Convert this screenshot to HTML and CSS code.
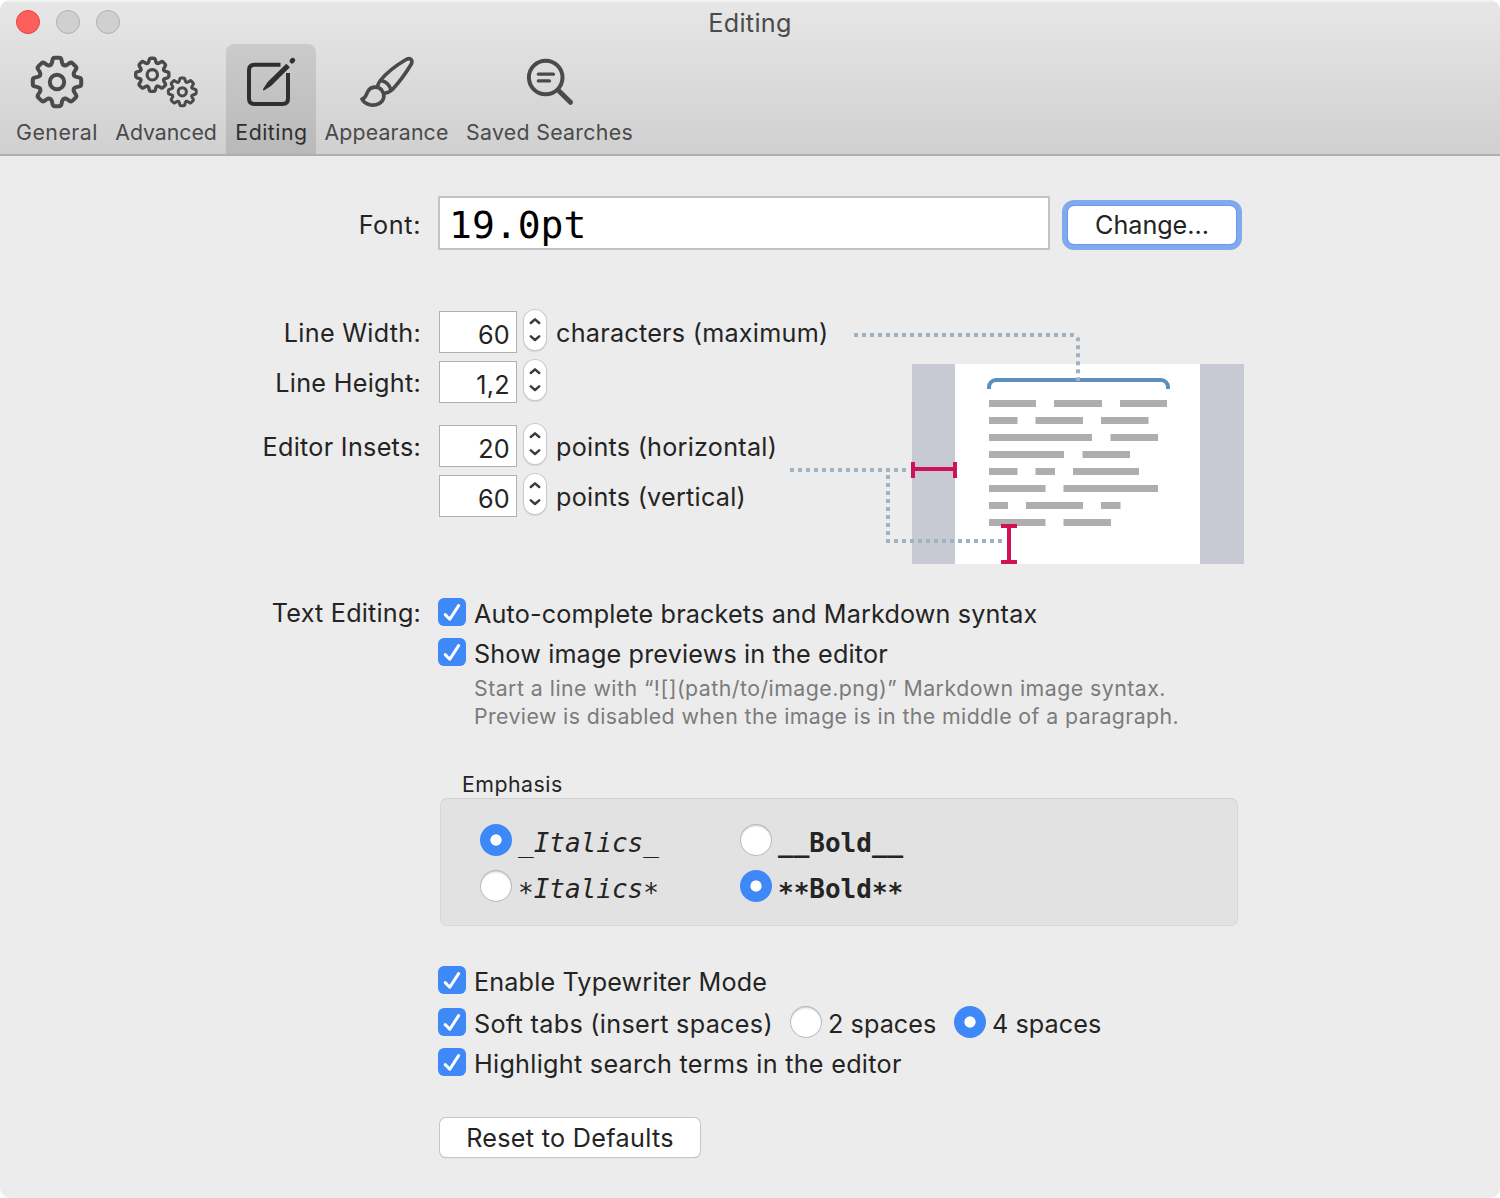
FILE: index.html
```html
<!DOCTYPE html>
<html lang="en">
<head>
<meta charset="utf-8">
<title>Editing</title>
<link rel="stylesheet" href="styles.css">
</head>
<body>
<svg class="defs" width="0" height="0" aria-hidden="true">
  <defs>
    <path id="tooth" vector-effect="non-scaling-stroke" d="M-6.96-16.8Q-5.5-17.4-5.1-19.2L-4.4-22.4Q-4-24.2-2.2-24.2H2.2Q4-24.2 4.4-22.4L5.1-19.2Q5.5-17.4 6.96-16.8"/>
    <g id="gear">
      <use href="#tooth"/>
      <use href="#tooth" transform="rotate(45)"/>
      <use href="#tooth" transform="rotate(90)"/>
      <use href="#tooth" transform="rotate(135)"/>
      <use href="#tooth" transform="rotate(180)"/>
      <use href="#tooth" transform="rotate(225)"/>
      <use href="#tooth" transform="rotate(270)"/>
      <use href="#tooth" transform="rotate(315)"/>
    </g>
    <path id="check" d="M7.2 16.6L11.8 21.2L20.6 7.6"/>
    <path id="arrows" d="M7.6 13.2L12 9.4L16.4 13.2M7.6 27.2L12 31L16.4 27.2"/>
  </defs>
</svg>
<div class="window">
  <header class="toolbar">
    <div class="titlebar">
      <div class="lights"><i class="light close"></i><i class="light"></i><i class="light"></i></div>
      <h1 class="title">Editing</h1>
    </div>
    <nav class="tabs">
      <a class="tab general">
        <svg class="icon" viewBox="25 48 64 64"><g stroke-width="4"><use href="#gear" transform="translate(57 82)"/><circle cx="57" cy="82" r="7.2"/></g></svg>
        <span class="wide">General</span>
      </a>
      <a class="tab advanced">
        <svg class="icon" viewBox="134 48 64 64"><g stroke-width="3.4"><use href="#gear" transform="translate(152.3 74.8) scale(.685)"/><circle cx="152.3" cy="74.8" r="5.2" stroke-width="3.2"/></g><g stroke-width="3"><use href="#gear" transform="translate(182.3 91.8) scale(.575)"/><circle cx="182.3" cy="91.8" r="4.1"/></g></svg>
        <span class="narrow">Advanced</span>
      </a>
      <a class="tab editing selected">
        <svg class="icon" viewBox="239 48 64 64"><path stroke-width="4" d="M280.5 64.8H254.5Q249 64.8 249 70.3V98.5Q249 104 254.5 104H282.5Q288 104 288 98.5V73"/><path class="fill" stroke="none" d="M263.2 90.3Q262.6 89.7 263.4 88.6L267.2 82.7Q267.7 82 268.4 81.3L286.3 63.7L289.9 67.3L271.8 85.3Q271 86.1 270.2 86.6L264.7 90.1Q263.7 90.8 263.2 90.3Z"/><path stroke-width="4.8" stroke-linecap="round" d="M292 61L292.8 60.2"/></svg>
        <span class="wide">Editing</span>
      </a>
      <a class="tab appearance">
        <svg class="icon" viewBox="355 48 64 64"><g stroke-width="3.6"><path d="M377.5 86.5C378 84.5 378.5 82.8 380.3 80.5C386 73.5 396 65.5 406.5 59.3Q409.6 57.6 411.3 59.7Q412.7 61.6 411 64.5C405 74.5 398.5 83 392 90Q389 92.7 384.5 93.2"/><path d="M381.8 80.8Q388.5 82.2 390.8 89.5"/><path d="M361.9 99C365.5 98.8 366 95 367.8 91.5C370.5 86.3 378 85.6 381.6 90C385.3 94.8 384.5 100.5 379 103.6C372.5 107 364.5 104.3 361.9 99Z"/></g></svg>
        <span>Appearance</span>
      </a>
      <a class="tab searches">
        <svg class="icon" viewBox="518 48 64 64"><circle cx="545.7" cy="77.5" r="16.8" stroke-width="4"/><path stroke-width="3.2" d="M538.3 74.2H553.5M538.3 80.9H549.5"/><path stroke-width="5" d="M559.5 91.5L570.5 102.3"/></svg>
        <span class="mid">Saved Searches</span>
      </a>
    </nav>
  </header>

  <main class="form">
    <section class="row font-row">
      <label class="label wide">Font:</label>
      <div class="font-field">19.0pt</div>
      <button class="button focused">Change...</button>
    </section>

    <section class="metrics">
      <div class="fields">
        <div class="row"><label class="label">Line Width:</label><span class="number">60</span><svg class="stepper" viewBox="0.5 0 23 41"><use href="#arrows"/></svg><span class="unit">characters (maximum)</span></div>
        <div class="row"><label class="label">Line Height:</label><span class="number">1,2</span><svg class="stepper" viewBox="0.5 0 23 41"><use href="#arrows"/></svg></div>
        <div class="row insets"><label class="label">Editor Insets:</label><span class="number">20</span><svg class="stepper" viewBox="0.5 0 23 41"><use href="#arrows"/></svg><span class="unit">points (horizontal)</span></div>
        <div class="row"><label class="label"></label><span class="number">60</span><svg class="stepper" viewBox="0.5 0 23 41"><use href="#arrows"/></svg><span class="unit">points (vertical)</span></div>
      </div>
      <svg class="diagram" viewBox="785 325 465 245">
        <path fill="#c8cad3" d="M912 364h43v200h-43zM1200 364h44v200h-44z"/>
        <path fill="#fff" d="M955 364h245v200h-245z"/>
        <path class="bracket" d="M989 389V387A7 7 0 0 1 996 380H1161A7 7 0 0 1 1168 387V389"/>
        <path class="lines" d="M989 403.5H1036M1054 403.5H1102M1120 403.5H1167M989 420.5H1017.5M1035.5 420.5H1083M1101 420.5H1148.5M989 437.5H1092M1110.5 437.5H1158M989 454.5H1064M1082.5 454.5H1130M989 471.5H1017.5M1035.5 471.5H1055M1073 471.5H1139M989 488.5H1045.5M1063.5 488.5H1158M989 505.5H1008M1026 505.5H1083M1101 505.5H1120.5M989 522.5H1045.5M1063.5 522.5H1111"/>
        <path class="dots" d="M854 335H1073A5 5 0 0 1 1078 340V381"/>
        <path class="dots" d="M790 470H906"/>
        <path class="dots" d="M888 475V535"/>
        <path class="dots" d="M886 541H1002"/>
        <path class="gauge" d="M913 462V478M913 469H955M955 462V478M1001 526H1017M1009 526V562M1001 562H1017"/>
      </svg>
    </section>

    <section class="row text-editing">
      <label class="label">Text Editing:</label>
      <div class="stack">
        <div class="option"><svg class="check" viewBox="0 0 28 28"><use href="#check"/></svg><span class="tight">Auto-complete brackets and Markdown syntax</span></div>
        <div class="option second"><svg class="check" viewBox="0 0 28 28"><use href="#check"/></svg><span class="tight">Show image previews in the editor</span></div>
        <p class="hint"><span class="h1">Start a line with “![](path/to/image.png)” Markdown image syntax.</span><br><span class="h2">Preview is disabled when the image is in the middle of a paragraph.</span></p>

        <h2 class="group-title">Emphasis</h2>
        <div class="group">
          <div class="choice"><i class="radio on"></i><em>_Italics_</em></div>
          <div class="choice"><i class="radio"></i><b>__Bold__</b></div>
          <div class="choice"><i class="radio"></i><em><span class="star">*</span>Italics<span class="star">*</span></em></div>
          <div class="choice"><i class="radio on"></i><b><span class="star">**</span>Bold<span class="star">**</span></b></div>
        </div>

        <div class="option typewriter"><svg class="check" viewBox="0 0 28 28"><use href="#check"/></svg><span class="tight">Enable Typewriter Mode</span></div>
        <div class="option tabs-option"><svg class="check" viewBox="0 0 28 28"><use href="#check"/></svg><span class="soft">Soft tabs (insert spaces)</span><i class="radio"></i><span class="spaces">2 spaces</span><i class="radio on"></i><span class="spaces">4 spaces</span></div>
        <div class="option highlight"><svg class="check" viewBox="0 0 28 28"><use href="#check"/></svg><span>Highlight search terms in the editor</span></div>

        <button class="button reset">Reset to Defaults</button>
      </div>
    </section>
  </main>
</div>
</body>
</html>
```
FILE: styles.css
```css
* { box-sizing: border-box; }
body { margin: 0; background: #fff; font-family: Inter, "Liberation Sans", sans-serif; font-size: 25.2px; line-height: 32px; letter-spacing: .28px; color: #242424; white-space: nowrap; }
.defs { position: absolute; }
.window { width: 1500px; height: 1198px; background: #ececec; border-radius: 10px; overflow: hidden; }

.toolbar { height: 156px; background: linear-gradient(#e7e7e7, #d0d0d0); border-bottom: 2px solid #b0b0b0; box-shadow: inset 0 2px #f3f3f3; }
.titlebar { height: 44px; display: grid; grid-template-columns: 128px 1fr 128px; }
.lights { display: flex; gap: 16px; padding: 10px 0 0 16px; }
.light { width: 24px; height: 24px; border-radius: 50%; background: #d0d0d0; border: 1px solid #b0b0b0; }
.light.close { background: #fd5f5a; border-color: #e2443f; }
.title { margin: 0; padding-top: 7px; text-align: center; font-size: 25.2px; font-weight: 400; letter-spacing: .3px; color: #4b4b4b; }

.tabs { display: flex; height: 110px; padding-left: 7px; }
.tab { display: flex; flex-direction: column; align-items: center; height: 110px; padding-top: 4px; color: #4a4a4a; font-size: 21.3px; line-height: 28px; font-weight: 430; letter-spacing: .15px; }
.tab span { margin-top: 6px; }
.general { width: 99px; }
.advanced { width: 120px; }
.editing { width: 90px; }
.appearance { width: 141px; }
.searches { width: 185px; }
.tab.selected { background: linear-gradient(#cbcbcb, #b9b9b9); border-radius: 8px 8px 0 0; color: #2f2f2f; }
.icon { width: 64px; height: 64px; fill: none; stroke: currentColor; stroke-linecap: round; stroke-linejoin: round; flex: none; }
.editing .icon { stroke-linecap: butt; }
.icon .fill { fill: currentColor; }
.tab .wide { letter-spacing: .5px; padding-left: 1px; }
.tab .mid { letter-spacing: .31px; }
.tab .narrow { letter-spacing: -.05px; }

.row { display: flex; align-items: flex-start; }
.label { width: 438px; flex: none; padding-right: 17px; text-align: right; }
.wide { letter-spacing: .6px; }
.tight { letter-spacing: .15px; }

.font-row { padding-top: 40px; }
.font-row .label { padding-top: 13px; }
.font-field { width: 612px; height: 54px; border: 2px solid #c3c3c3; background: #fff; padding-left: 9px; font: 38px/55px "DejaVu Sans Mono", monospace; letter-spacing: 0; color: #000; }
.button { font: inherit; letter-spacing: .3px; color: #242424; background: #fff; border: 0; padding: 0; text-align: center; }
.focused { width: 168px; height: 38px; margin: 10px 0 0 18px; border-radius: 6px; box-shadow: 0 0 0 1px #6a9ae6, 0 0 0 6px #7fabee; letter-spacing: -.05px; padding-top: 1px; line-height: 37px; }

.metrics { display: flex; margin-top: 59px; height: 208px; }
.fields { width: 785px; flex: none; }
.fields .row { height: 50px; }
.fields .label { padding-top: 8px; min-height: 40px; }
.fields .insets { margin-top: 14px; }
.number { width: 80px; height: 44px; margin: 1px 0 0; flex: none; border: 1px solid #ececec; background: #fff; box-shadow: inset 0 0 0 1px #b1b1b1; padding: 2px 7px 0 0; text-align: right; line-height: 45px; }
.stepper { width: 22px; height: 40px; margin: 1px 1px 0 6px; flex: none; background: #fff; border-radius: 11px; box-shadow: 0 0 0 1px #cbcbcb, 0 1px 2px rgba(0,0,0,.3); fill: none; stroke: #3c3c3c; stroke-width: 2.6; stroke-linecap: round; stroke-linejoin: round; }
.unit { padding: 8px 0 0 9px; letter-spacing: .25px; }
.diagram { width: 465px; height: 245px; margin-top: 16px; flex: none; fill: none; }
.bracket { stroke: #5c90ba; stroke-width: 4; }
.lines { stroke: #aeaeae; stroke-width: 7; }
.dots { stroke: #a0b1c0; stroke-width: 4; stroke-dasharray: 4; }
.gauge { stroke: #cf1159; stroke-width: 4; }

.text-editing { margin-top: 81px; }
.text-editing > .label { margin-top: -1px; letter-spacing: .2px; }
.stack { display: flex; flex-direction: column; align-items: flex-start; }
.option { display: flex; height: 28px; }
.option > span { margin-left: 8px; }
.second { margin-top: 12px; }
.check { width: 28px; height: 28px; border-radius: 6px; background: #3f88f7; flex: none; fill: none; stroke: #fff; stroke-width: 3; stroke-linecap: round; stroke-linejoin: round; }
.hint { margin: 8px 0 0 36px; font-size: 21.3px; line-height: 28px; color: #7b7b7b; }
.h1 { letter-spacing: .475px; }
.h2 { letter-spacing: .41px; }
.group-title { margin: 40px 0 0 24px; font-size: 21.3px; line-height: 28px; font-weight: 400; letter-spacing: .5px; }
.group { width: 798px; height: 128px; margin-left: 2px; border: 1px solid #d8d8d8; border-top-color: #cfcfcf; border-radius: 7px; background: #e2e2e2; padding: 25px 39px; display: grid; grid-template-columns: 260px 260px; grid-template-rows: 32px 32px; row-gap: 14px; }
.choice { display: flex; font: 26px/38px "DejaVu Sans Mono", monospace; letter-spacing: 0; }
.choice em, .choice b { margin-left: 6px; }
.star { position: relative; top: 4px; font-style: normal; }
.radio { width: 32px; height: 32px; flex: none; border-radius: 50%; background: #fff; box-shadow: inset 0 0 0 1px #bcbcbc, inset 0 2px 2px rgba(0,0,0,.2); }
.radio.on { background: radial-gradient(circle, #fff 5.2px, #3f88f7 6px); box-shadow: none; }
.typewriter { margin-top: 40px; }
.tabs-option { margin-top: 12px; height: 32px; align-items: flex-start; }
.tabs-option .check { margin-top: 2px; }
.tabs-option > span { margin-top: 2px; }
.tabs-option .soft { width: 316px; letter-spacing: .3px; }
.option > .spaces { width: 126px; margin-left: 6px; letter-spacing: .06px; }
.highlight { margin-top: 10px; }
.reset { width: 260px; height: 39px; margin: 42px 0 0 2px; border-radius: 6px; box-shadow: 0 0 0 1px #c6c6c6, 0 1px 1px rgba(0,0,0,.3); padding-top: 1px; line-height: 38px; }
```
